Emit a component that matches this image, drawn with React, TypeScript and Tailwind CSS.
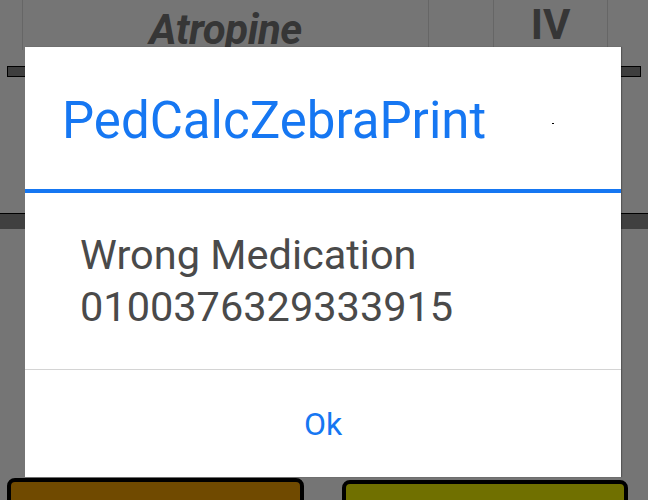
const font = "font-['Roboto','Liberation_Sans',sans-serif]";

function BackgroundScreen() {
  return (
    <div className="flex h-full flex-col">
      <div className="flex h-[50px] shrink-0">
        <div className="w-[22px]" />
        <div className="flex w-[406px] justify-center border-l border-[#666]">
          <span className="mt-[7px] text-[42px] leading-[46px] font-bold italic tracking-[-0.5px] text-[#363636]">
            Atropine
          </span>
        </div>
        <div className="w-[65px] border-l border-[#666]" />
        <div className="flex w-[114px] justify-center border-l border-[#666]">
          <span className="mt-[2px] text-[42px] leading-[46px] font-bold text-[#363636]">IV</span>
        </div>
        <div className="flex-1 border-l border-[#666]" />
      </div>
      <div className="mx-[7px] mt-[16px] h-[11px] shrink-0 border border-black bg-[#3e3e3e]" />
      <div className="mt-[136px] h-[16px] shrink-0 border-t border-black bg-[#404040]" />
      <div className="mt-[249px] flex shrink-0 items-start">
        <div className="ml-[7px] h-[30px] w-[297px] rounded-t-[8px] border-4 border-black bg-[#704a00]" />
        <div className="ml-[38px] mt-[2px] h-[30px] w-[286px] rounded-t-[8px] border-4 border-black bg-[#707000]" />
      </div>
    </div>
  );
}

function AlertDialog() {
  return (
    <div className="absolute left-[25px] top-[47px] flex h-[430px] w-[596px] flex-col bg-white shadow-[1px_0_1px_rgba(0,0,0,0.25)]">
      <div className="relative flex h-[142px] shrink-0 items-center pl-[37px] pt-[4px]">
        <span className="text-[51px] leading-none text-[#1677f2]">PedCalcZebraPrint</span>
        <span className="absolute left-[527px] top-[76px] h-[1px] w-[2px] bg-black" />
      </div>
      <div className="h-[4px] shrink-0 bg-[#1677f2]" />
      <div className="flex h-[176px] shrink-0 flex-col justify-center pl-[55px] text-[41.5px] leading-[52px] text-[#4a4a4a]">
        <span>Wrong Medication</span>
        <span>0100376329333915</span>
      </div>
      <div className="h-[1px] shrink-0 bg-[#d4d4d4]" />
      <div className="flex flex-1 items-center justify-center pt-[1px]">
        <span className="text-[32px] leading-none text-[#1677f2]">Ok</span>
      </div>
    </div>
  );
}

export default function App() {
  return (
    <div className={`relative h-[500px] w-[648px] overflow-hidden bg-[#757575] ${font}`}>
      <BackgroundScreen />
      <AlertDialog />
    </div>
  );
}
